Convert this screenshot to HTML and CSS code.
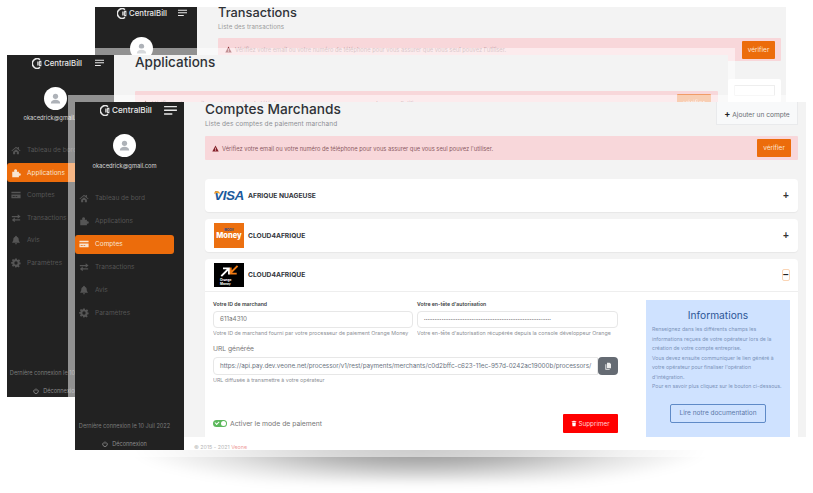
FILE: index.html

```html
<!DOCTYPE html>
<html lang="fr">
<head>
  <meta charset="UTF-8">
  <meta name="viewport" content="width=device-width, initial-scale=1.0">
  <title>CentralBill - Comptes Marchands</title>
  <link rel="stylesheet" href="styles.css">
</head>
<body>
  <svg class="sprites" aria-hidden="true">
    <symbol id="i-logo" viewBox="0 0 24 24">
      <path d="M17.500 3.400A10.500 10.500 0 1 0 17.500 20.600" fill="none" stroke="currentColor" stroke-width="3.400"/>
      <path d="M11.500 7.500h3v9h-3zM15.500 6h5v12h-5zM17.500 9v6h1V9z" fill="currentColor" fill-rule="evenodd"/>
    </symbol>
    <symbol id="i-menu" viewBox="0 0 14 12">
      <path d="M0 1h14v1.500H0zM0 5h14v1.500H0zM0 9h9v1.500H0z" fill="currentColor"/>
    </symbol>
    <symbol id="i-user" viewBox="0 0 24 24">
      <circle cx="12" cy="8.500" r="4.200" fill="currentColor"/>
      <path d="M4.500 20c0-4 3.300-6 7.500-6s7.500 2 7.500 6z" fill="currentColor"/>
    </symbol>
    <symbol id="i-home" viewBox="0 0 24 24">
      <path d="M12 4 1 13.500l1.500 1.700L12 7l9.500 8.200 1.500-1.700-4-3.500V5h-3v2.400zM5 16v6h5v-5h4v5h5v-6l-7-6z" fill="currentColor"/>
    </symbol>
    <symbol id="i-puzzle" viewBox="0 0 24 24">
      <path d="M3 9h5c-1.500-4 .5-6 3-6s4.500 2 3 6h5v4c3-1.500 4.500.5 4.500 2.500S22 19.500 19 18v4H3z" fill="currentColor"/>
    </symbol>
    <symbol id="i-card" viewBox="0 0 24 24">
      <path d="M1 4h22v4H1zM1 11h22v9H1zM4 15v2h5v-2zm7 0v2h4v-2z" fill="currentColor" fill-rule="evenodd"/>
    </symbol>
    <symbol id="i-swap" viewBox="0 0 24 24">
      <path d="M2 7h14V3l7 5.500-7 5.500v-4H2zM22 15H9v-4l-7 5.500L9 22v-4h13z" fill="currentColor"/>
    </symbol>
    <symbol id="i-bell" viewBox="0 0 24 24">
      <path d="M12 1.500a2 2 0 0 1 2 2v.700c3 .9 4.500 3.400 4.500 6.300 0 4 1.500 5 2.500 6.500v1.500H3V17c1-1.500 2.500-2.500 2.500-6.500 0-2.900 1.500-5.400 4.500-6.300v-.7a2 2 0 0 1 2-2zM9.500 20h5a2.500 2.500 0 0 1-5 0z" fill="currentColor"/>
    </symbol>
    <symbol id="i-cog" viewBox="0 0 24 24">
      <path d="M10 1h4l.6 3.200 1.800.8 2.700-1.800 2.800 2.800-1.900 2.700.8 1.800L23 11v4l-3.200.5-.8 1.800 1.900 2.700-2.800 2.800-2.700-1.900-1.800.8L13 23h-3l-.6-3.200-1.800-.8-2.700 1.900-2.800-2.800 1.900-2.700-.8-1.800L0 13v-3l3.200-.6.8-1.800-1.900-2.700 2.800-2.800 2.700 1.800 1.800-.7zM12 8a4 4 0 1 0 0 8 4 4 0 0 0 0-8z" fill="currentColor" fill-rule="evenodd"/>
    </symbol>
    <symbol id="i-power" viewBox="0 0 24 24">
      <path d="M12 2v9M6.500 6a9 9 0 1 0 11 0" fill="none" stroke="currentColor" stroke-width="3.500"/>
    </symbol>
    <symbol id="i-warn" viewBox="0 0 24 24">
      <path d="M12 2 1 22h22zM10.800 9h2.400v7h-2.400zm0 8.500h2.400V20h-2.400z" fill="currentColor" fill-rule="evenodd"/>
    </symbol>
    <symbol id="i-trash" viewBox="0 0 24 24">
      <path d="M3 3h6l1-2h4l1 2h6v3H3zM4.500 8h15L18 23H6z" fill="currentColor"/>
    </symbol>
    <symbol id="i-copy" viewBox="0 0 24 24">
      <path d="M9 2h8l4 4v13H9zM4 7h3v14h10v2H4z" fill="currentColor"/>
    </symbol>
  </svg>

  <div class="floor-shadow"></div>

  <!-- fenetre du fond -->
  <section class="window win-transactions">
    <aside class="sidebar">
      <div class="brand">
        <svg class="brand-logo"><use href="#i-logo"/></svg>
        <span class="brand-name">CentralBill</span>
        <svg class="brand-menu"><use href="#i-menu"/></svg>
      </div>
      <div class="avatar"><svg><use href="#i-user"/></svg></div>
    </aside>
    <main class="main">
      <h1 class="page-title">Transactions</h1>
      <p class="page-sub">Liste des transactions</p>
      <div class="alert">
        <svg class="alert-icon"><use href="#i-warn"/></svg>
        <span class="alert-text">Vérifiez votre email ou votre numéro de téléphone pour vous assurer que vous seul pouvez l'utiliser.</span>
        <button class="btn-verify">vérifier</button>
      </div>
      <div class="search-card"><div class="search-box"></div></div>
    </main>
  </section>

  <!-- fenetre du milieu -->
  <section class="window win-applications">
    <aside class="sidebar">
      <div class="brand">
        <svg class="brand-logo"><use href="#i-logo"/></svg>
        <span class="brand-name">CentralBill</span>
        <svg class="brand-menu"><use href="#i-menu"/></svg>
      </div>
      <div class="avatar"><svg><use href="#i-user"/></svg></div>
      <p class="email">okacedrick@gmail.com</p>
      <nav class="nav">
        <a class="nav-item"><svg><use href="#i-home"/></svg>Tableau de bord</a>
        <a class="nav-item active"><svg><use href="#i-puzzle"/></svg>Applications</a>
        <a class="nav-item"><svg><use href="#i-card"/></svg>Comptes</a>
        <a class="nav-item"><svg><use href="#i-swap"/></svg>Transactions</a>
        <a class="nav-item"><svg><use href="#i-bell"/></svg>Avis</a>
        <a class="nav-item"><svg><use href="#i-cog"/></svg>Paramètres</a>
      </nav>
      <p class="last-login">Dernière connexion le 10 Juil 2022</p>
      <a class="logout"><svg><use href="#i-power"/></svg>Déconnexion</a>
    </aside>
    <main class="main">
      <h1 class="page-title">Applications</h1>
      <div class="alert">
        <svg class="alert-icon"><use href="#i-warn"/></svg>
        <span class="alert-text">Vérifiez votre email ou votre numéro de téléphone pour vous assurer que vous seul pouvez l'utiliser.</span>
        <button class="btn-verify">vérifier</button>
      </div>
    </main>
  </section>

  <!-- fenetre de devant -->
  <section class="window win-comptes">
    <aside class="sidebar">
      <div class="brand">
        <svg class="brand-logo"><use href="#i-logo"/></svg>
        <span class="brand-name">CentralBill</span>
        <svg class="brand-menu"><use href="#i-menu"/></svg>
      </div>
      <div class="avatar"><svg><use href="#i-user"/></svg></div>
      <p class="email">okacedrick@gmail.com</p>
      <nav class="nav">
        <a class="nav-item"><svg><use href="#i-home"/></svg>Tableau de bord</a>
        <a class="nav-item"><svg><use href="#i-puzzle"/></svg>Applications</a>
        <a class="nav-item active"><svg><use href="#i-card"/></svg>Comptes</a>
        <a class="nav-item"><svg><use href="#i-swap"/></svg>Transactions</a>
        <a class="nav-item"><svg><use href="#i-bell"/></svg>Avis</a>
        <a class="nav-item"><svg><use href="#i-cog"/></svg>Paramètres</a>
      </nav>
      <p class="last-login">Dernière connexion le 10 Juil 2022</p>
      <a class="logout"><svg><use href="#i-power"/></svg>Déconnexion</a>
    </aside>
    <main class="main">
      <div class="content">
        <div class="head-row">
          <div>
            <h1 class="page-title">Comptes Marchands</h1>
            <p class="page-sub">Liste des comptes de paiement marchand</p>
          </div>
          <button class="btn-add"><b>+</b> Ajouter un compte</button>
        </div>
        <div class="alert">
          <svg class="alert-icon"><use href="#i-warn"/></svg>
          <span class="alert-text">Vérifiez votre email ou votre numéro de téléphone pour vous assurer que vous seul pouvez l'utiliser.</span>
          <button class="btn-verify">vérifier</button>
        </div>

        <div class="account">
          <div class="account-head">
            <div class="logo-box logo-visa"><span>VISA</span></div>
            <span class="account-name">AFRIQUE NUAGEUSE</span>
            <span class="toggle-sign">+</span>
          </div>
        </div>

        <div class="account">
          <div class="account-head">
            <div class="logo-box logo-moov"><small>MOOV</small><span>Money</span></div>
            <span class="account-name">CLOUD4AFRIQUE</span>
            <span class="toggle-sign">+</span>
          </div>
        </div>

        <div class="account account-open">
          <div class="account-head">
            <div class="logo-box logo-orange">
              <svg viewBox="0 0 30 14">
                <path d="M6 13 14 5M8 4h7v7" fill="none" stroke="#fff" stroke-width="2.200"/>
                <path d="M25 1 17 9M24 10h-7V3" fill="none" stroke="#f07a13" stroke-width="2.200"/>
              </svg>
              <span>Orange<br>Money</span>
            </div>
            <span class="account-name">CLOUD4AFRIQUE</span>
            <span class="toggle-sign minus">−</span>
          </div>
          <div class="account-body">
            <div class="form">
              <div class="form-cols">
                <div>
                  <label class="label">Votre ID de marchand</label>
                  <div class="input">611a4310</div>
                  <p class="help">Votre ID de marchand fourni par votre processeur de paiement Orange Money</p>
                </div>
                <div>
                  <label class="label">Votre en-tête d'autorisation</label>
                  <div class="input dots">••••••••••••••••••••••••••••••••••••••••••••••••••••••••••••••••••••••••</div>
                  <p class="help">Votre en-tête d'autorisation récupérée depuis la console développeur Orange</p>
                </div>
              </div>
              <label class="label-url">URL générée</label>
              <div class="url-group">
                <div class="input url">https://api.pay.dev.veone.net/processor/v1/rest/payments/merchants/c0d2bffc-c623-11ec-957d-0242ac19000b/processors/</div>
                <button class="btn-copy"><svg><use href="#i-copy"/></svg></button>
              </div>
              <p class="help">URL diffusée à transmettre à votre opérateur</p>
              <div class="form-foot">
                <span class="switch"><i></i></span>
                <span class="switch-label">Activer le mode de paiement</span>
                <button class="btn-delete"><svg><use href="#i-trash"/></svg>Supprimer</button>
              </div>
            </div>
            <div class="info">
              <h2>Informations</h2>
              <p>Renseignez dans les différents champs les informations reçues de votre opérateur lors de la création de votre compte entreprise.<br>
              Vous devez ensuite communiquer le lien généré à votre opérateur pour finaliser l'opération d'intégration.<br>
              Pour en savoir plus cliquez sur le bouton ci-dessous.</p>
              <button class="btn-doc">Lire notre documentation</button>
            </div>
          </div>
        </div>
      </div>
      <footer class="footer">© 2015 - 2021 <span>Veone</span></footer>
    </main>
  </section>
</body>
</html>
```

FILE: styles.css

```css
* { box-sizing: border-box; }
html, body { margin: 0; padding: 0; }
body {
  position: relative; width: 813px; height: 493px; overflow: hidden;
  background: #fff; font-family: Inter, "Liberation Sans", sans-serif; color: #333;
}
h1, h2, p { margin: 0; font-weight: normal; }
button { font-family: inherit; border: 0; padding: 0; }
.sprites { display: none; }

.floor-shadow {
  position: absolute; left: 130px; top: 440px; width: 580px; height: 42px;
  background: radial-gradient(ellipse 50% 100% at 50% 20%, rgba(0,0,0,.42) 0%, rgba(0,0,0,.3) 35%, rgba(0,0,0,.1) 72%, rgba(0,0,0,0) 100%);
  filter: blur(5px);
}

/* windows: the wide translucent edge is part of each screenshot */
.window {
  position: absolute; display: flex; overflow: hidden;
  border: 7px solid rgba(255,255,255,.5); background-clip: padding-box;
}
.win-transactions { left: 88px; top: 0; width: 705px; height: 110px; border-color: transparent; }
.win-applications { left: 0; top: 48px; width: 735px; height: 356px; }
.win-comptes { left: 68px; top: 95px; width: 745px; height: 362px; }

/* sidebar */
.sidebar { flex: none; width: 109px; background: #222; color: #555; display: flex; flex-direction: column; }
.win-transactions .sidebar { width: 102px; }
.win-applications .sidebar { width: 107px; }
.brand { display: flex; align-items: center; height: 14px; margin-top: 1px; padding-left: 25px; color: #e8e8e8; }
.brand-logo { width: 11px; height: 11px; flex: none; }
.brand-name { margin-left: 1px; font-size: 8.200px; font-weight: 500; }
.brand-menu { width: 13px; height: 11px; margin-left: auto; margin-right: 7px; }
.win-transactions .brand { padding-left: 22px; margin-top: -1px; }
.win-applications .brand-menu, .win-transactions .brand-menu { width: 9px; height: 8px; margin-right: 10px; }
.win-transactions .brand-name, .win-applications .brand-name { font-size: 7.800px; }

.avatar {
  width: 23px; height: 23px; margin: 17px auto 0; border-radius: 50%; background: #fff;
  color: #aeb2b8; display: flex; align-items: center; justify-content: center;
  position: relative; left: -5px;
}
.avatar svg { width: 15px; height: 15px; }
.email { margin-top: 5px; padding-right: 10px; text-align: center; font-size: 5.800px; color: #d6d6d6; line-height: 8px; white-space: nowrap; }

.nav { margin-top: 16.500px; display: flex; flex-direction: column; }
.nav-item { display: flex; align-items: center; height: 23px; padding-left: 4px; font-size: 6.500px; gap: 6px; margin-right: 10px; }
.nav-item svg { width: 10px; height: 10px; flex: none; }
.nav-item.active { background: #ec6c0b; color: #f8e5d2; height: 19px; margin: 2px 10px 2px 0; border-radius: 3px; }
.last-login { margin-top: auto; padding-right: 10px; text-align: center; font-size: 5.600px; color: #7a7a7a; line-height: 8px; white-space: nowrap; }
.logout { display: flex; align-items: center; justify-content: center; gap: 4px; height: 8px; margin: 10px 10px 2px 0; font-size: 5.600px; color: #8a8a8a; }
.logout svg { width: 6px; height: 6px; }
.win-applications .nav { margin-top: 16.750px; }
.win-applications .nav-item { height: 22.500px; }
.win-applications .nav-item.active { height: 19px; margin-top: 1.750px; margin-bottom: 1.750px; }
.win-applications .email { margin-top: 4px; }

/* main */
.main { flex: 1; min-width: 0; background: #f3f3f3; display: flex; flex-direction: column; }
.page-title { font-size: 13.500px; line-height: 14px; font-weight: 500; color: #2f3237; white-space: nowrap; }
.page-sub { margin-top: 8px; font-size: 6.500px; letter-spacing: .1px; line-height: 7px; color: #8d8f93; }
.win-transactions .main { padding: 0 5px 0 21px; }
.win-transactions .page-title { line-height: 11px; font-size: 12.800px; }
.win-transactions .page-sub { margin-top: 5px; font-size: 6.200px; color: #9a9a9a; }
.win-transactions .alert { margin-top: 8px; height: 23px; padding-right: 6px; }
.win-transactions .btn-verify { width: 33px; }
.search-card { margin: 18px 0 0 auto; width: 53px; height: 30px; background: #fff; border-radius: 2px; padding: 6px; }
.search-box { height: 11px; border: 1px solid #eee; }
.win-applications .main { padding: 0 10px 0 21px; }
.win-applications .page-title { line-height: 14px; }
.win-applications .alert { margin-top: 22px; }

.alert { display: flex; align-items: center; flex: none; height: 24px; padding: 0 7px 0 7px; background: #f8d7da; border-radius: 1px; }
.alert-icon { width: 7px; height: 7px; flex: none; color: #842029; }
.alert-text { margin-left: 3px; font-size: 5.750px; color: #8b5a62; white-space: nowrap; }
.btn-verify { margin-left: auto; width: 34px; height: 18px; background: #ec6c0b; color: #fde6d4; font-size: 6.500px; border-radius: 1px; }
.win-applications .btn-verify { opacity: .55; }
.win-transactions .alert-text { color: #b38f94; }

.content { flex: 1; min-height: 0; overflow: hidden; padding: 0 8px 0 21px; }
.head-row { display: flex; justify-content: space-between; height: 34px; }
.head-row .page-title { font-size: 13.700px; margin-top: 0; }
.head-row .page-sub { margin-top: 5px; white-space: nowrap; }
.btn-add { width: 82px; height: 23px; background: #f8f9fa; border: 1px solid #e9eaec; border-top: 0; font-size: 6.600px; color: #6a6d72; white-space: nowrap; }
.btn-add b { font-size: 9px; color: #222; }

.account { background: #fff; border-radius: 4px; margin-top: 7px; box-shadow: 0 1px 1px rgba(0,0,0,.05); }
.content .alert + .account { margin-top: 19px; }
.account-head { display: flex; align-items: center; height: 33px; padding: 0 8px 0 9px; }
.account-open .account-head { border-bottom: 1px solid #eee; }
.logo-box { width: 30px; height: 25px; flex: none; overflow: hidden; }
.account-name { margin-left: 4px; font-size: 6.700px; font-weight: 700; color: #33363c; }
.toggle-sign { margin-left: auto; font: 700 10px "Liberation Sans", sans-serif; color: #333; width: 8px; text-align: center; }
.toggle-sign.minus { height: 12px; line-height: 10px; border: 1px solid #fbd5b5; border-radius: 2px; color: #222; }

.logo-visa { display: flex; align-items: center; justify-content: center; position: relative; }
.logo-visa span { font: italic 700 13.500px "Liberation Sans", sans-serif; color: #1c5a9c; letter-spacing: -.4px; }
.logo-visa::before { content: ""; position: absolute; left: 0; top: 8px; width: 6px; height: 5px; border-top: 2px solid #f0a030; border-radius: 60% 60% 0 0; }
.logo-moov { background: #ec7010; color: #fff; text-align: center; line-height: 1; padding-top: 6px; }
.logo-moov small { display: block; font-size: 3px; color: #274a87; font-weight: 700; }
.logo-moov span { display: block; font-size: 7.500px; font-weight: 800; }
.logo-orange { background: #000; color: #fff; height: 24px; text-align: center; padding-top: 2px; }
.logo-orange svg { display: block; width: 30px; height: 12px; }
.logo-orange span { display: block; font-size: 3.200px; line-height: 4px; font-weight: 700; text-align: left; padding-left: 6px; margin-top: 1px; }

.account-body { display: flex; padding: 8px 8px 0 8px; height: 150px; }
.form { width: 405px; flex: none; }
.form-cols { display: grid; grid-template-columns: 200px 201px; gap: 4px; }
.label { display: block; font-size: 5.200px; font-weight: 600; line-height: 7px; margin-top: 1px; color: #3a3d42; }
.input { height: 17px; margin-top: 3px; padding: 0 6px; border: 1px solid #e7e7e7; border-radius: 4px; background: #fff; font-size: 6.300px; line-height: 15px; color: #777; white-space: nowrap; overflow: hidden; }
.dots { font-size: 2.800px; letter-spacing: .19px; color: #666; }
.help { margin-top: 2px; font-size: 5.300px; line-height: 7px; color: #8d9096; white-space: nowrap; overflow: hidden; }
.label-url { display: block; margin-top: 8px; font-size: 6.700px; line-height: 9px; color: #777; }
.url-group { display: flex; margin-top: 3px; }
.url { flex: 1; min-width: 0; height: 18px; margin: 0; border-radius: 4px 0 0 4px; line-height: 16px; font-size: 6.300px; color: #6a7280; }
.btn-copy { width: 20px; height: 18px; background: #656b73; color: #eee; border-radius: 4px; display: flex; align-items: center; justify-content: center; }
.btn-copy svg { width: 8px; height: 8px; }
.form-foot { display: flex; align-items: center; margin-top: 30px; height: 19px; }
.switch { width: 14px; height: 7px; border-radius: 4px; background: #5cb85c; position: relative; }
.switch i { position: absolute; right: 1px; top: 1px; width: 5px; height: 5px; border-radius: 50%; background: #fff; }
.switch::before { content: ""; position: absolute; left: 2px; top: 1px; width: 3px; height: 2px; border-left: 1px solid #fff; border-bottom: 1px solid #fff; transform: rotate(-45deg); }
.switch-label { margin-left: 3px; font-size: 6.800px; color: #777; }
.btn-delete { margin-left: auto; width: 55px; height: 19px; background: #f00; color: #ffd6d6; font-size: 6.300px; border-radius: 1px; display: flex; align-items: center; justify-content: center; gap: 1px; }
.btn-delete svg { width: 6px; height: 7px; color: #fff; }

.info { margin-left: 28px; width: 144px; flex: none; background: #cfe2ff; padding: 0 6px; text-align: center; height: 142px; }
.info h2 { margin-top: 9px; font-size: 10.200px; font-weight: 400; line-height: 12px; color: #2c5596; }
.info p { margin-top: 4px; text-align: left; font-size: 5.200px; line-height: 9.500px; color: #7d94bb; }
.btn-doc { margin-top: 12px; width: 96px; height: 19px; background: transparent; border: 1px solid #5f8ac7; border-radius: 2px; font-size: 6.500px; color: #5c78a8; }

.footer { flex: none; height: 13px; background: #fff; padding: 7px 0 0 10px; font-size: 5.300px; line-height: 7px; color: #b5b5b5; overflow: hidden; }
.footer span { color: #ee9a99; }
```
